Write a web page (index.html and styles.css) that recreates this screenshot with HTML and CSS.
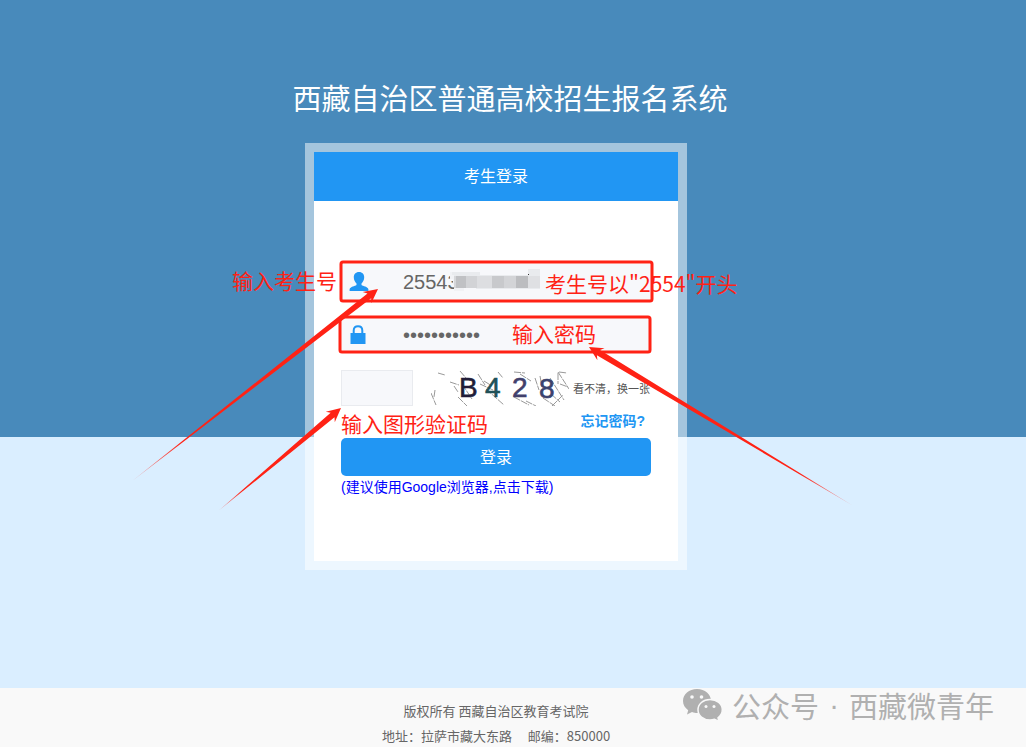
FILE: index.html
```
<!DOCTYPE html>
<html lang="zh-CN">
<head>
<meta charset="utf-8">
<title>西藏自治区普通高校招生报名系统</title>
<link rel="stylesheet" href="styles.css">
</head>
<body>
<main class="stage">
  <h1 class="title">西藏自治区普通高校招生报名系统</h1>
  <div class="login">
    <section class="card">
      <h2 class="card-head">考生登录</h2>
      <form class="form">
        <div class="field">
          <label class="field-icon" for="user" aria-label="考生号">
            <svg width="20" height="20" viewBox="0 0 20 20"><path d="M10 0C6.600 0 4.800 2.300 4.800 5.300C4.800 8 6 10.200 7.500 11.400V13C6 14.300 1.200 14.600 .6 17.200V19H19.400V17.200C18.800 14.600 14 14.300 12.500 13V11.400C14 10.200 15.200 8 15.200 5.300C15.200 2.300 13.400 0 10 0Z"/></svg>
          </label>
          <input class="field-input" id="user" type="text" value="25543">
          <svg class="mosaic" width="92" height="22" viewBox="0 0 92 22" shape-rendering="crispEdges">
            <path fill="#f1f2f5" d="M0 3H10V6H14V22H4V16H3V10H0Z"/>
            <path fill="#e9ebee" d="M2 3H30V6H78V0H90V20H26V18H10V17H4V6H2Z"/>
            <path fill="#d6d7da" d="M4 7H16V19H4Z"/><path fill="#c0c1c4" d="M6 7H16V19H6Z"/>
            <path fill="#d2d3d6" d="M16 7H27V19H16Z"/><path fill="#dddee1" d="M27 7H42V19H27Z"/>
            <path fill="#c8c9cc" d="M42 7H54V19H42Z"/><path fill="#d3d4d7" d="M54 7H66V19H54Z"/>
            <path fill="#bcbdc0" d="M66 7H78V19H66Z"/><path fill="#dfe0e3" d="M78 7H90V19H78Z"/>
            <path fill="#333" d="M78 5H79V6H78Z"/>
          </svg>
        </div>
        <div class="field">
          <label class="field-icon" for="pass" aria-label="密码">
            <svg width="18" height="20" viewBox="0 0 18 20"><path d="M1.500 8H16.500V19H1.500Z"/><path class="shackle" d="M4.700 8V5.500C4.700 2.700 6.300 1.200 9 1.200S13.300 2.700 13.300 5.500V8"/></svg>
          </label>
          <input class="field-input" id="pass" type="password" value="12345678901">
        </div>
        <div class="captcha">
          <input class="captcha-input" type="text" aria-label="验证码">
          <svg class="captcha-image" width="138" height="36" viewBox="0 0 138 36">
            <g class="noise">
              <path d="M7 3L14 5M19 12L28 15M23 16L27 22M4 20L3 27M0 23L5 35M29 1L35 8M31 14L41 29M27 27L36 36M47 4L54 15M53 11L61 16M49 14L62 20M67 2L72 8M55 19L73 35M83 2L94 3M89 4L100 11M83 27L98 35M95 31L105 36M104 8L108 20M109 6L111 17M119 8L133 30M127 2L138 19M128 2L136 3M127 3V14M129 14L137 17M112 28L124 36M120 24L129 32M121 36L132 25"/>
            </g>
            <g class="code">
              <text x="28" y="27" fill="#211c38" stroke="#211c38">B</text>
              <text x="54" y="27" fill="#205057" stroke="#205057">4</text>
              <text x="81" y="27" fill="#41406c" stroke="#41406c">2</text>
              <text x="108" y="28" fill="#3b426d" stroke="#3b426d">8</text>
            </g>
          </svg>
          <button class="refresh" type="button">看不清，换一张</button>
        </div>
        <div class="forgot"><a class="forgot-link" href="#">忘记密码?</a></div>
        <button class="submit" type="submit">登录</button>
        <a class="download" href="#">(建议使用Google浏览器,点击下载)</a>
      </form>
    </section>
    <svg class="notes" width="382" height="427" viewBox="305 143 382 427">
      <defs>
        <linearGradient id="fade"><stop offset="0" stop-color="#ff2215" stop-opacity=".3"/><stop offset=".2" stop-color="#ff2215"/></linearGradient>
      </defs>
      <g class="frames">
        <rect x="341" y="262" width="311" height="39" rx="2"/>
        <rect x="340" y="317" width="310" height="35" rx="2"/>
      </g>
      <g fill="url(#fade)">
        <path transform="translate(378 289) rotate(-38)" d="M0 0L-14 -7L-11 -3L-312 0L-11 3L-14 7Z"/>
        <path transform="translate(341 408) rotate(-40)" d="M0 0L-14 -7L-11 -3L-160 0L-11 3L-14 7Z"/>
        <path transform="translate(589 347) rotate(211)" d="M0 0L-14 -7L-11 -3L-308 0L-11 3L-14 7Z"/>
      </g>
      <g class="note-text">
        <text x="232" y="289">输入考生号</text>
        <text x="545" y="292">考生号以"2554"开头</text>
        <text x="512" y="342">输入密码</text>
        <text x="341" y="432">输入图形验证码</text>
      </g>
    </svg>
  </div>
</main>
<footer class="footer">
  <p class="footer-line">版权所有 西藏自治区教育考试院</p>
  <p class="footer-line">地址：拉萨市藏大东路&emsp; 邮编：850000</p>
  <div class="watermark">
    <svg width="40" height="34" viewBox="0 0 40 34">
      <path fill="#b0b0b0" d="M14 1C6 1 0 6.400 0 13C0 16.800 2 20 5.200 22.200L4 26.500L9 24C11 24.700 12.500 25 14 25C22 25 28 19.600 28 13S22 1 14 1Z"/>
      <path fill="#b0b0b0" stroke="#f9f9f9" stroke-width="1.500" d="M27 11.500C20 11.500 15 16 15 21.800S20 32 27 32C28.500 32 30 31.800 31.500 31.200L36 33.500L35 29.800C37.500 28 39.300 25.400 39.300 21.800C39.300 16 34 11.500 27 11.500Z"/>
      <g fill="#f9f9f9"><circle cx="9" cy="9" r="1.800"/><circle cx="18.500" cy="9" r="1.800"/><circle cx="23" cy="18.500" r="1.500"/><circle cx="31" cy="18.500" r="1.500"/></g>
    </svg>
    <span>公众号</span>
    <span class="watermark-dot">·</span>
    <span>西藏微青年</span>
  </div>
</footer>
</body>
</html>
```
FILE: styles.css
```
* { box-sizing: border-box; }

body {
  margin: 0;
  min-height: 100vh;
  display: flex;
  flex-direction: column;
  font-family: "Liberation Sans", "Noto Sans CJK SC", sans-serif;
  color: #666;
}

button, input { font-family: inherit; border: 0; padding: 0; margin: 0; }
a { text-decoration: none; }

.stage {
  flex: 1;
  display: flex;
  flex-direction: column;
  align-items: center;
  padding: 78px 34px 118px 0;
  background: linear-gradient(#488abb 437px, #daeeff 437px);
}

.title {
  margin: 0 0 21px 28px;
  font-size: 29px;
  line-height: 44px;
  font-weight: 400;
  color: #fff;
}

.login { position: relative; width: 382px; max-width: 100%; }

.card {
  border: 9px solid rgba(255, 255, 255, .5);
  background: #fff padding-box;
}

.card-head {
  margin: 0;
  background: #2196f3;
  color: #fff;
  font-size: 16px;
  line-height: 49px;
  font-weight: 400;
  text-align: center;
}

.form {
  display: flex;
  flex-direction: column;
  padding: 63px 27px;
}

.field {
  position: relative;
  display: flex;
  align-items: center;
  height: 36px;
  margin-bottom: 17px;
  background: #f7f8fb;
}

.field-icon {
  width: 62px;
  padding-left: 8px;
  display: flex;
  fill: #2196f3;
}

.shackle { fill: none; stroke: #2196f3; stroke-width: 2; }

.field-input {
  flex: 1;
  min-width: 0;
  height: 36px;
  background: transparent;
  font-size: 20px;
  color: #666;
  outline: 0;
}

.mosaic { position: absolute; left: 109px; top: 5px; }

.captcha { display: flex; align-items: center; height: 36px; }

.captcha-input {
  width: 72px;
  height: 36px;
  margin-right: 18px;
  background: #f7f8fb;
  border: 1px solid #e9ebef;
}

.captcha-image { flex: none; margin-right: 4px; }
.noise { fill: none; stroke: #999; stroke-width: 1; stroke-dasharray: 7 1; }
.code { font-size: 28px; stroke-width: 0.6; }

.refresh {
  background: none;
  color: #555;
  font-size: 11px;
  white-space: nowrap;
}

.forgot {
  padding-right: 6px;
  font-size: 14px;
  line-height: 30px;
  height: 32px;
  font-weight: 700;
  text-align: right;
}

.forgot-link { color: #2196f3; }

.submit {
  height: 38px;
  padding-bottom: 2px;
  border-radius: 5px;
  background: #2196f3;
  color: #fff;
  font-size: 16px;
}

.download { font-size: 14px; line-height: 22px; color: #00f; }

.notes {
  position: absolute;
  left: 0;
  top: 0;
  overflow: visible;
  pointer-events: none;
}

.frames { fill: none; stroke: #ff2215; stroke-width: 3; }
.note-text { fill: #ff2215; font-size: 21px; font-family: "Noto Sans CJK SC", sans-serif; }

.footer {
  position: relative;
  padding: 10px 34px 0 0;
  height: 59px;
  background: #f9f9f9;
  font-family: "Noto Sans CJK SC", sans-serif;
  font-size: 13px;
  text-align: center;
}

.footer-line { margin: 0; line-height: 25px; white-space: nowrap; }

.watermark {
  position: absolute;
  right: 32px;
  top: 0;
  display: flex;
  align-items: center;
  gap: 9px;
  font-size: 29px;
  line-height: 34px;
  color: #b0b0b0;
}

.watermark-dot { width: 12px; font-family: "Liberation Sans", sans-serif; }
```
